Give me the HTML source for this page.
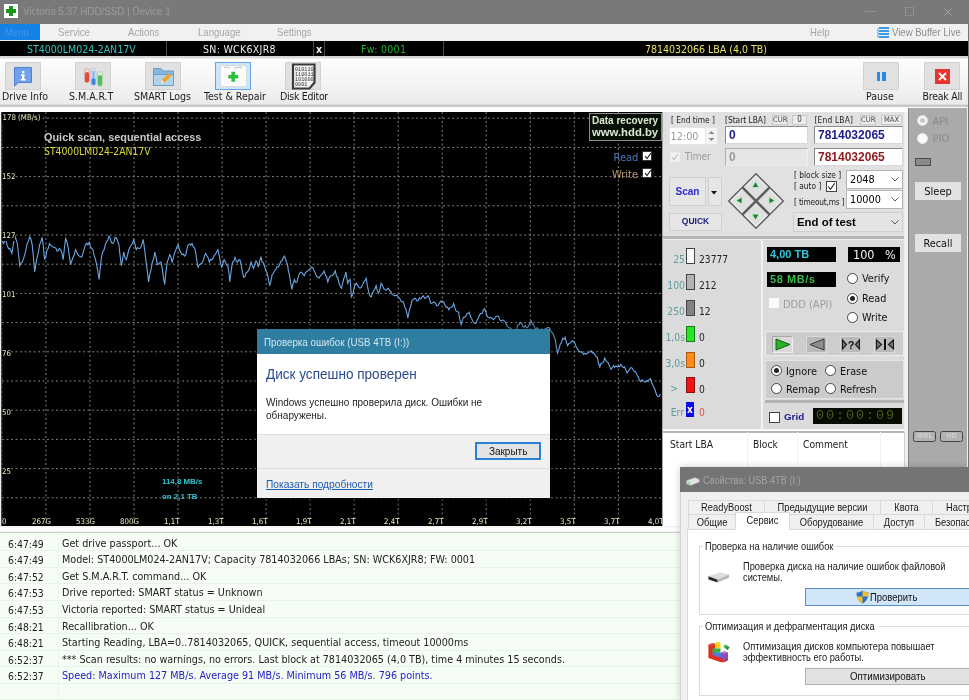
<!DOCTYPE html>
<html><head><meta charset="utf-8"><title>Victoria 5.37 HDD/SSD | Device 1</title>
<style>
*{box-sizing:border-box;margin:0;padding:0}
html,body{width:969px;height:700px;overflow:hidden;background:#f0f0f0;font-family:"DejaVu Sans Condensed","Liberation Sans",sans-serif;font-size:10.5px;color:#000}
.a,.a *{position:absolute;white-space:nowrap}
.se{font-family:"Liberation Sans",sans-serif}
.b{font-weight:bold}
.sx{transform:scaleX(.87);transform-origin:0 50%}
.sxc{transform:scaleX(.87);transform-origin:50% 50%}
#title{left:0;top:0;width:969px;height:24px;background:#797979}
#menu{left:0;top:24px;width:969px;height:17px;background:#f1f1f1}
#menu span{top:2px;color:#a6a6a6;font-size:11px;font-family:"Liberation Sans",sans-serif;transform:scaleX(.87);transform-origin:0 50%}
#bar{left:0;top:41px;width:968px;height:15px;background:#000;font-size:10.5px}
#bar span{top:1.600px}
#bar i{top:0;width:1px;height:15px;background:#4a4a4a}
#tool{left:0;top:56px;width:969px;height:56px;background:linear-gradient(#d4d4d4 0,#dadada 2px,#fdfdfd 3px,#f7f7f7 20px,#ebebeb 48px,#c7c7c7 49px,#c9c9c9 50.500px,#fbfbfb 51.500px,#fff 56px)}
.tb{top:6px;width:36px;height:28px;background:#e1e1e1;border:1px solid #d2d2d2}
.tl{top:34px;font-size:10.5px;color:#1a1a1a}
#chart{left:2px;top:112px;width:660px;height:414px;background:#000;overflow:hidden;font-size:7.800px;color:#ececc0}
#chart span{line-height:10px}
.cb{width:10px;height:10px;background:#fff;border:1px solid #333}
.chk{left:1px;top:-1px;width:8px;height:10px}
#rp{left:663px;top:112px;width:241px;height:124px;background:#e1e1e1}
#rp2{left:663px;top:240px;width:241px;height:189px;background:#dbdbdb}
.in{height:18px;background:#fff;border:1px solid #8a8a8a;border-right-color:#d8d8d8;border-bottom-color:#d8d8d8;font-weight:bold;font-size:12px;line-height:16px;padding-left:3px;font-family:"Liberation Sans",sans-serif}
.sb{height:10px;border:1px solid #c8c8c8;background:#ececec;font-size:7.5px;line-height:8px;text-align:center;color:#444}
.btn{background:#e6e6e6;border:1px solid #d0d0d0;text-align:center}
.cmb{height:19px;background:#fff;border:1px solid #b4b4b4;font-size:10.800px;line-height:17px;padding-left:3px}
.rd{width:11px;height:11px;border-radius:50%;background:#fff;border:1px solid #444}
.rd.on::after{content:"";position:absolute;left:2px;top:2px;width:5px;height:5px;border-radius:50%;background:#222}
.rl{font-size:10.800px;line-height:14px;color:#111}
.bl{left:23px;width:9px;height:16px;border:1px solid #444}
.bt{font-size:10.300px;line-height:14px;color:#5f9ea0;text-align:right;width:22px;left:0;margin-top:3px}
.bn{font-size:10.200px;line-height:14px;left:36px;color:#222;margin-top:3px}
#gp{left:908px;top:108px;width:59px;height:359px;background:#aaaaaa}
#log{left:0;top:533px;width:680px;height:167px;background:#f5fdf5;font-size:10.7px;color:#222}
#log div{left:0;height:16.590px;width:680px;border-bottom:1px solid #e9f4e9;line-height:16px}
#log span{top:1px}
#log i{position:absolute;left:58px;top:0;width:1px;height:167px;background:#ebf5eb}
#log .t{left:8px;font-size:10.300px}
#log .m{left:62px}
#dlg{left:257px;top:329px;width:293px;height:169px;background:#f0f0f0;box-shadow:0 1px 10px 2px rgba(0,0,0,.55);font-family:"Liberation Sans",sans-serif;font-size:11px}
#pw{left:680px;top:467px;width:289px;height:233px;background:#f0f0f0;font-family:"Liberation Sans",sans-serif;font-size:10.5px;color:#1a1a1a;overflow:hidden;box-shadow:0 0 7px rgba(0,0,0,.2)}
.tab{height:15px;border:1px solid #d9d9d9;border-bottom:none;background:#f0f0f0}
#pw span{font-size:10.500px;line-height:13px;transform:scaleX(.887);transform-origin:0 50%}
#pw span.c{text-align:center;transform-origin:50% 50%}
.gb{border:1px solid #dcdcdc}
</style></head><body><div id="root" style="position:absolute;left:0;top:0;width:969px;height:700px;overflow:hidden;will-change:transform;opacity:.999">
<div id="title" class="a">
  <div style="left:4px;top:4px;width:14px;height:14px;background:#fff"></div>
  <div style="left:9px;top:6px;width:4px;height:10px;background:#169a16"></div>
  <div style="left:6px;top:9px;width:10px;height:4px;background:#169a16"></div>
  <div class="se" style="left:23px;top:5px;font-size:11.5px;color:#9b9b9b;transform:scaleX(.855);transform-origin:0 50%">Victoria 5.37 HDD/SSD | Device 1</div>
  <div style="left:865px;top:11px;width:10px;height:1px;background:#959595"></div>
  <div style="left:905px;top:7px;width:8.500px;height:9px;border:1px solid #8e8e8e"></div>
  <svg style="left:944px;top:7.500px" width="8" height="8"><path d="M0.500 0.500L7.500 7.500M7.500 0.500L0.500 7.500" stroke="#a2a2a2" stroke-width="1"/></svg>
</div>
<div class="a" style="left:968px;top:24px;width:1px;height:443px;background:#747474;z-index:5"></div><div class="a" style="left:967px;top:108px;width:1px;height:359px;background:#efefef;z-index:5"></div><div class="a" style="left:908px;top:108px;width:1px;height:359px;background:#808080;z-index:5"></div>
<div id="menu" class="a">
  <div style="left:0;top:0;width:39.500px;height:15.500px;background:#1681e4"></div>
  <span style="left:5px;color:#3f96ee">Menu</span>
  <span style="left:58px">Service</span>
  <span style="left:128px">Actions</span>
  <span style="left:198px">Language</span>
  <span style="left:277px">Settings</span>
  <span style="left:810px">Help</span>
  <svg style="left:877px;top:3px" width="12" height="12"><g fill="#3d98ea"><rect x="0" y="1" width="2" height="10" fill="#9ccaf2"/><rect x="2" y="0" width="10" height="2"/><rect x="2" y="3" width="10" height="2"/><rect x="2" y="6" width="10" height="2"/><rect x="2" y="9" width="10" height="2"/></g></svg>
  <span style="left:892px;color:#8c8c8c">View Buffer Live</span>
</div>
<div id="bar" class="a">
  <span style="left:27px;color:#34c4c0">ST4000LM024-2AN17V</span>
  <i style="left:166px"></i>
  <span style="left:203px;color:#ededed;letter-spacing:.3px">SN: WCK6XJR8</span>
  <i style="left:313px"></i>
  <span class="b" style="left:316px;color:#f0f0f0">x</span>
  <i style="left:324px"></i>
  <span style="left:361px;color:#22b02c;letter-spacing:.3px">Fw: 0001</span>
  <i style="left:443px"></i>
  <span style="left:645px;color:#e8e264">7814032066 LBA (4,0 TB)</span>
</div>
<div id="tool" class="a">
  <div class="tb" style="left:5px"><svg style="left:6px;top:3px" width="22" height="22"><path d="M2.5 1.5h17v15h-13l-4 3.5z" fill="#6fa1ec" stroke="#4c7fd4"/><rect x="10" y="5" width="2.4" height="2.2" fill="#fff"/><rect x="9" y="8.5" width="3.4" height="1.5" fill="#fff"/><rect x="10" y="8.5" width="2.4" height="5.5" fill="#fff"/><rect x="8.6" y="13" width="5.2" height="1.5" fill="#fff"/></svg></div><div class="tl" style="left:2px">Drive Info</div>
  <div class="tb" style="left:75px"><svg style="left:6px;top:3px" width="24" height="22"><rect x="2.5" y="2.5" width="5" height="14" rx="2.5" fill="#f3d6d6" stroke="#d8b0b0"/><rect x="3" y="6" width="4" height="10.5" rx="2" fill="#e8483c"/><rect x="9" y="2.500" width="5" height="17" rx="2.5" fill="#dbe8f6" stroke="#b8c8e0"/><rect x="9.500" y="12" width="4" height="7" rx="2" fill="#3b82d8"/><rect x="10.5" y="5" width="2" height="8" fill="#7fb0e6"/><rect x="15.500" y="5.500" width="5" height="15" rx="2.500" fill="#d8efd8" stroke="#b4d4b4"/><rect x="16" y="9" width="4" height="11" rx="2" fill="#4cc05c"/></svg></div><div class="tl" style="left:69px">S.M.A.R.T</div>
  <div class="tb" style="left:145px"><svg style="left:6px;top:3px" width="24" height="21"><path d="M1.500 2.500h7.500l2 2.500h10.500v14.500h-20z" fill="#86b6dc" stroke="#6a9cc8"/><path d="M1.500 8.500h20v11h-20z" fill="#b2d3ec" stroke="#6a9cc8"/><path d="M8.500 17.500l1.300-3.800 6.700-6.200 2.800 2.800-6.800 6.200z" fill="#f0a232"/><path d="M8.500 17.500l1.300-3.800 2.700 2.800z" fill="#fbe6c4"/></svg></div><div class="tl" style="left:134px">SMART Logs</div>
  <div class="tb" style="left:215px;background:#cfe5f9;border-color:#62a4e6"><svg style="left:3px;top:1px" width="30" height="25"><rect x="1.500" y="1.500" width="26" height="21" rx="2" fill="#fbfbfb" stroke="#dcdcdc"/><path d="M5 3.500q4.500-1.500 6 1M15 4.500q3-2 8-1" stroke="#bdbdbd" fill="none"/><path d="M12.400 7.800h3.600v3.200h3.200v3.600h-3.200v3.200h-3.600v-3.200h-3.200v-3.600h3.200z" fill="#2dc03a"/></svg></div><div class="tl" style="left:204px">Test &amp; Repair</div>
  <div class="tb" style="left:285px"><svg style="left:4px;top:0px" width="28" height="27" font-family="Liberation Mono,monospace" font-size="5.200" fill="#333"><path d="M3 1.500h21.500v18l-5 6h-16.500z" fill="#f4f4f4" stroke="#3a3a3a" stroke-width="2.200"/><text x="5" y="7.500">010110</text><text x="5" y="12.500">110011</text><text x="5" y="17.500">101000</text><text x="5" y="22.500">0001</text></svg></div><div class="tl" style="left:280px;letter-spacing:-.3px">Disk Editor</div>
  <div class="tb" style="left:863px"><div style="left:12.500px;top:9px;width:3.500px;height:9px;background:#2a8be2"></div><div style="left:18px;top:9px;width:3.500px;height:9px;background:#2a8be2"></div></div><div class="tl" style="left:866px">Pause</div>
  <div class="tb" style="left:924px"><div style="left:10px;top:6px;width:15px;height:15px;background:#e8362e"></div><svg style="left:13px;top:9px" width="9" height="9"><path d="M1 1L8 8M8 1L1 8" stroke="#fff" stroke-width="1.800"/></svg></div><div class="tl" style="left:922.500px;letter-spacing:-.25px">Break All</div>
</div>
<div id="chart" class="a">
<svg width="660" height="415" style="left:0;top:0">
<g stroke="#7e7e7e" stroke-width="1" stroke-dasharray="2,2.500" style="filter:blur(.35px)"><line x1="-0.1" y1="0" x2="-0.1" y2="416"/><line x1="43.9" y1="0" x2="43.9" y2="416"/><line x1="88.0" y1="0" x2="88.0" y2="416"/><line x1="132.0" y1="0" x2="132.0" y2="416"/><line x1="176.0" y1="0" x2="176.0" y2="416"/><line x1="220.1" y1="0" x2="220.1" y2="416"/><line x1="264.1" y1="0" x2="264.1" y2="416"/><line x1="308.1" y1="0" x2="308.1" y2="416"/><line x1="352.1" y1="0" x2="352.1" y2="416"/><line x1="396.2" y1="0" x2="396.2" y2="416"/><line x1="440.2" y1="0" x2="440.2" y2="416"/><line x1="484.2" y1="0" x2="484.2" y2="416"/><line x1="528.3" y1="0" x2="528.3" y2="416"/><line x1="572.3" y1="0" x2="572.3" y2="416"/><line x1="616.3" y1="0" x2="616.3" y2="416"/><line x1="660.4" y1="0" x2="660.4" y2="416"/><line x1="0" y1="6.2" x2="660" y2="6.2"/><line x1="0" y1="35.4" x2="660" y2="35.4"/><line x1="0" y1="64.6" x2="660" y2="64.6"/><line x1="0" y1="93.8" x2="660" y2="93.8"/><line x1="0" y1="123.0" x2="660" y2="123.0"/><line x1="0" y1="152.2" x2="660" y2="152.2"/><line x1="0" y1="181.4" x2="660" y2="181.4"/><line x1="0" y1="210.6" x2="660" y2="210.6"/><line x1="0" y1="239.8" x2="660" y2="239.8"/><line x1="0" y1="269.0" x2="660" y2="269.0"/><line x1="0" y1="298.2" x2="660" y2="298.2"/><line x1="0" y1="327.4" x2="660" y2="327.4"/><line x1="0" y1="356.6" x2="660" y2="356.6"/><line x1="0" y1="385.8" x2="660" y2="385.8"/></g>
<polyline transform="translate(-2,-112)" fill="none" stroke="#6ea6e2" stroke-width="1.100" points="1.2,239.8 2.5,241.5 3.7,243.5 5.4,238.6 6.4,242.5 7.4,246.0 8.7,248.8 9.9,248.5 10.9,250.8 11.9,253.4 13.6,242.3 15.4,237.3 16.4,240.4 17.3,243.5 18.6,255.0 19.8,265.8 21.1,262.8 22.3,262.1 23.6,258.4 24.8,254.7 26.0,249.6 27.2,243.5 28.4,241.2 29.7,236.8 31.0,239.3 32.2,244.8 33.5,257.7 34.7,272.0 36.0,263.1 37.2,257.2 38.4,252.1 39.6,244.8 40.9,241.7 42.1,237.3 43.4,246.8 44.6,259.6 45.9,256.4 47.1,249.7 48.3,248.3 49.5,243.5 50.8,245.3 52.0,246.4 53.3,247.2 54.5,247.2 55.8,248.0 57.0,251.0 58.2,250.7 59.5,248.5 60.7,249.7 62.0,253.5 63.2,259.6 64.4,248.2 65.6,238.6 66.8,241.2 68.1,247.2 69.3,255.8 70.6,264.6 71.8,260.7 73.1,257.2 74.3,254.7 75.5,249.7 76.8,252.3 78.0,254.7 79.2,256.0 80.5,256.4 81.7,257.2 82.9,253.7 84.2,248.8 85.4,244.8 86.7,243.2 87.9,244.9 89.2,242.3 90.4,246.6 91.7,248.5 92.9,249.7 94.1,255.4 95.4,259.0 96.6,264.6 97.8,271.0 99.1,279.4 100.3,267.5 101.5,257.2 102.8,251.5 104.0,249.9 105.3,244.8 106.5,241.5 107.8,240.2 109.0,236.1 110.2,238.2 111.5,242.7 112.7,243.5 114.0,241.7 115.2,237.3 116.4,238.0 117.7,241.3 118.9,244.8 120.2,256.8 121.4,265.8 122.6,258.9 123.8,252.2 125.0,257.6 126.3,259.6 127.5,255.1 128.8,249.8 130.0,247.2 131.2,245.2 132.5,243.3 133.7,239.8 134.9,243.9 136.2,249.7 137.4,247.8 138.7,248.3 139.9,248.5 141.0,247.1 142.1,243.3 143.2,239.3 144.6,249.3 146.1,262.1 147.3,271.1 148.6,281.9 149.8,274.3 151.1,269.5 152.3,262.1 153.6,259.0 154.8,252.2 156.1,257.2 157.3,264.6 158.5,264.0 159.8,262.7 161.0,262.1 162.2,268.4 163.5,277.8 164.7,284.4 165.9,271.9 167.2,262.1 168.4,258.9 169.7,254.7 170.9,257.0 172.1,262.1 173.4,257.7 174.6,252.8 175.9,249.7 177.1,246.4 178.3,244.8 179.5,249.8 180.8,252.5 182.0,254.7 183.3,254.0 184.5,256.1 185.8,254.7 187.0,248.7 188.2,244.8 189.5,244.0 190.7,245.2 192.0,243.5 193.2,246.9 194.5,247.9 195.7,252.2 196.9,261.4 198.1,267.1 199.4,264.8 200.6,263.7 201.9,263.3 203.1,261.0 204.4,256.1 205.6,253.4 206.8,255.6 208.1,257.7 209.3,262.1 210.5,259.4 211.8,259.9 213.0,258.4 214.2,255.3 215.5,254.4 216.8,251.4 218.0,249.7 219.2,255.3 220.5,263.0 221.7,267.1 222.9,263.3 224.1,259.6 225.4,261.9 226.6,265.1 227.9,265.8 228.9,272.7 229.8,281.9 231.2,270.8 232.5,262.2 233.8,261.2 235.0,257.2 236.2,260.8 237.4,262.2 238.7,260.0 239.9,259.7 241.1,264.4 242.4,272.2 243.6,277.1 244.8,277.0 246.1,272.7 247.3,272.1 248.6,270.4 249.8,266.9 251.1,262.2 252.3,265.7 253.5,268.4 254.8,264.4 256.0,261.0 257.2,262.7 258.5,267.2 259.8,260.5 261.0,257.2 262.2,262.2 263.5,262.9 264.7,267.2 265.9,271.0 267.2,273.3 268.4,278.6 269.6,285.7 270.9,281.3 272.1,274.6 273.3,273.3 274.6,270.5 275.8,269.6 277.0,266.8 278.3,267.1 279.5,264.7 280.8,261.3 282.0,261.0 283.2,257.5 284.5,256.0 286.0,260.6 287.5,264.7 288.4,270.9 289.4,274.6 290.6,282.4 291.9,289.4 293.1,283.7 294.4,279.5 295.6,282.3 296.9,282.0 298.1,277.6 299.4,273.7 300.6,272.1 301.8,272.5 303.1,274.4 304.3,275.8 305.5,272.6 306.8,271.4 308.0,270.9 309.2,269.2 310.5,268.7 311.7,267.2 312.9,267.9 314.2,270.8 315.4,273.3 316.6,276.6 317.9,277.1 319.1,278.2 320.4,275.8 321.6,274.7 322.9,273.2 324.1,270.9 325.3,274.9 326.6,277.0 327.8,282.0 329.0,278.3 330.3,276.1 331.5,275.8 332.8,275.6 334.0,273.3 335.3,270.9 336.5,276.7 337.8,277.4 339.0,283.3 340.2,286.2 341.5,288.2 342.7,283.2 343.9,278.3 344.9,276.0 345.9,272.1 347.6,283.3 348.9,280.7 350.1,279.5 351.4,296.9 352.6,294.9 353.8,289.4 355.1,284.8 356.3,283.3 357.5,285.1 358.8,287.4 360.0,288.2 361.2,287.6 362.5,284.9 363.7,282.0 364.9,280.9 366.2,278.3 367.4,286.2 368.7,291.9 369.9,295.9 371.2,296.9 372.4,293.3 373.7,290.7 374.9,288.9 376.1,285.7 377.4,290.9 378.6,293.2 379.9,289.6 381.1,283.3 382.3,285.0 383.6,288.4 384.8,289.4 386.0,290.3 387.3,288.9 388.5,288.2 389.7,290.7 391.0,291.9 392.2,294.4 393.4,295.1 394.7,295.6 395.9,295.6 397.2,294.9 398.4,297.8 399.7,298.1 400.9,301.1 402.2,301.9 403.4,301.8 404.6,306.4 405.9,309.3 406.9,313.2 407.8,317.9 409.6,309.3 410.8,305.8 412.0,300.6 413.2,299.6 414.5,298.1 415.7,298.7 417.0,301.0 418.2,300.6 419.5,297.9 420.7,299.0 422.0,296.9 423.2,295.6 424.5,298.1 425.7,298.1 426.9,296.8 428.1,295.6 429.4,298.4 430.6,303.1 431.8,303.4 433.1,302.2 434.3,301.8 435.5,303.4 436.8,305.8 438.0,305.5 439.3,303.4 440.5,301.3 441.8,301.8 442.5,301.1 443.8,302.3 445.0,304.9 446.2,307.2 447.5,307.1 448.7,309.8 449.9,307.4 451.1,307.3 452.4,306.9 453.6,303.6 454.9,307.9 456.1,311.1 457.4,311.5 458.6,312.3 459.9,319.9 461.1,324.7 462.3,320.3 463.5,317.2 464.8,317.2 466.0,316.0 467.1,313.7 468.1,313.3 469.2,312.3 470.7,317.1 472.2,319.7 473.4,322.4 474.7,323.5 475.9,323.4 477.1,320.1 478.4,318.0 479.6,314.8 480.9,313.5 482.1,313.5 483.4,309.7 484.6,308.6 485.9,312.3 487.1,316.0 488.3,317.6 489.6,318.1 490.8,317.2 492.0,318.4 493.3,319.7 494.5,318.5 496.0,316.4 497.5,316.0 498.6,316.5 499.6,319.2 500.7,321.0 501.9,320.2 503.2,320.0 504.4,321.0 505.6,322.8 506.9,325.6 508.1,327.2 509.3,328.0 510.6,328.1 511.8,329.6 513.0,331.3 514.3,332.2 515.5,330.9 516.6,328.7 517.7,325.2 518.8,324.7 520.2,322.4 521.7,323.4 523.0,326.6 524.2,327.2 525.4,325.5 526.7,328.0 527.9,327.2 529.0,325.4 530.0,322.4 531.1,321.0 532.4,323.9 533.6,324.7 535.4,329.6 536.6,327.9 537.9,328.3 539.1,329.6 540.3,329.9 541.6,328.8 542.8,330.9 544.0,331.3 545.3,328.3 546.5,328.4 547.7,327.5 549.0,327.6 550.2,329.6 551.5,331.9 552.7,333.3 554.0,336.2 555.2,339.5 556.4,346.8 557.6,353.2 558.9,349.4 560.1,344.5 561.4,342.5 562.6,338.3 563.9,339.4 565.1,337.1 566.4,342.1 567.6,345.7 568.8,343.4 570.0,343.3 571.2,342.0 572.5,340.8 573.7,341.7 575.0,343.2 576.2,347.0 577.4,348.5 578.7,351.0 579.9,351.9 581.2,351.6 582.4,352.7 583.7,354.4 584.9,353.4 586.2,354.3 587.4,353.2 588.6,352.4 589.9,351.9 591.1,350.7 592.3,352.9 593.6,352.8 594.8,354.4 596.0,356.7 597.3,356.9 598.5,363.3 599.8,366.8 601.0,363.5 602.2,363.1 603.5,362.2 604.7,358.1 606.0,360.8 607.2,361.8 608.4,363.0 609.7,366.6 610.9,369.3 612.1,367.9 613.4,365.5 614.6,367.4 615.9,365.9 617.1,366.8 618.3,366.2 619.6,366.5 620.8,364.3 622.0,366.2 623.3,367.6 624.5,366.8 625.8,369.8 627.0,373.0 628.2,371.7 629.5,369.3 630.8,367.6 632.0,368.0 633.2,370.0 634.5,371.6 635.7,371.7 636.9,374.7 638.1,376.7 639.4,379.9 640.6,381.6 641.9,380.0 643.1,380.4 644.3,381.8 645.6,382.1 646.8,380.4 648.0,381.6 649.3,379.4 650.5,378.7 651.8,383.1 653.0,385.4 654.2,387.8 655.5,391.5 656.8,395.5 658.0,396.5 659.2,396.5 660.4,394.0"/>
</svg>
  <span style="left:-.500px;top:1px;background:#000;padding:0 1px">178 (MB/s)</span>
  <span style="left:0;top:60px;background:#000">152</span>
  <span style="left:0;top:119px;background:#000">127</span>
  <span style="left:0;top:178px;background:#000">101</span>
  <span style="left:0;top:237px;background:#000">76</span>
  <span style="left:0;top:296px;background:#000">50</span>
  <span style="left:0;top:355px;background:#000">25</span>
  <span style="left:0px;top:404.500px">0</span>
  <span style="left:30px;top:404.500px">267G</span>
  <span style="left:74px;top:404.500px">533G</span>
  <span style="left:118px;top:404.500px">800G</span>
  <span style="left:162px;top:404.500px">1,1T</span>
  <span style="left:206px;top:404.500px">1,3T</span>
  <span style="left:250px;top:404.500px">1,6T</span>
  <span style="left:294px;top:404.500px">1,9T</span>
  <span style="left:338px;top:404.500px">2,1T</span>
  <span style="left:382px;top:404.500px">2,4T</span>
  <span style="left:426px;top:404.500px">2,7T</span>
  <span style="left:470px;top:404.500px">2,9T</span>
  <span style="left:514px;top:404.500px">3,2T</span>
  <span style="left:558px;top:404.500px">3,5T</span>
  <span style="left:602px;top:404.500px">3,7T</span>
  <span style="left:646px;top:404.500px">4,0T</span>
  <span class="b se" style="left:42px;top:19px;font-size:10.900px;line-height:12px;color:#c9c9c9">Quick scan, sequential access</span>
  <span style="left:42px;top:32.500px;font-size:10.300px;line-height:12px;color:#dada3c">ST4000LM024-2AN17V</span>
  <span class="b se" style="left:160px;top:365px;font-size:7.900px;color:#2fc4d4">114,8 MB/s</span>
  <span class="b se" style="left:160px;top:379.500px;font-size:7.900px;color:#2fc4d4">on 2,1 TB</span>
  <div style="left:587px;top:1px;width:73px;height:28px;background:#061006;border:1px solid #8c8c8c"></div>
  <span class="b se" style="left:590px;top:3px;font-size:10px;line-height:12px;color:#dbe8d2">Data recovery</span>
  <span class="b se" style="left:590px;top:14px;font-size:11.300px;line-height:13px;color:#dbe8d2">www.hdd.by</span>
  <span style="left:611.500px;top:39px;font-size:11px;line-height:13px;color:#4c7cbc">Read</span>
  <div class="cb" style="left:640px;top:39px"><svg class="chk" viewBox="0 0 8 10"><path d="M1 5l2 2.500 4-5.500" stroke="#222" fill="none" stroke-width="1.200"/></svg></div>
  <span style="left:610px;top:56px;font-size:11px;line-height:13px;color:#b9986e">Write</span>
  <div class="cb" style="left:640px;top:56px"><svg class="chk" viewBox="0 0 8 10"><path d="M1 5l2 2.500 4-5.500" stroke="#222" fill="none" stroke-width="1.200"/></svg></div>
</div>
<div id="rp" class="a">
  <span style="left:8px;top:2px;font-size:8.300px;line-height:12px;color:#222">[ End time ]</span>
  <span style="left:62px;top:2px;font-size:8.300px;line-height:12px;color:#222">[Start LBA]</span>
  <div class="sb" style="left:109px;top:3px;width:16px">CUR</div>
  <div class="sb" style="left:129px;top:3px;width:15px;font-size:8px">0</div>
  <span style="left:151.500px;top:2px;font-size:8.300px;line-height:12px;color:#222;letter-spacing:.2px">[End LBA]</span>
  <div class="sb" style="left:197px;top:3px;width:16px">CUR</div>
  <div class="sb" style="left:218px;top:3px;width:21px">MAX</div>
  <div style="left:6px;top:15px;width:49px;height:18px;background:#fff;border:1px solid #e6e6e6"></div>
  <span style="left:7.500px;top:17.500px;font-size:10.800px;line-height:14px;color:#9a9a9a">12:00</span>
  <div style="left:42px;top:16px;width:12px;height:16px;background:#f4f4f4;border-left:1px solid #e8e8e8"></div>
  <svg style="left:45px;top:18px" width="7" height="12"><path d="M0.500 4L3.500 1L6.500 4zM0.500 8L3.500 11L6.500 8z" fill="#8a8a8a"/></svg>
  <div class="in" style="left:62px;top:14px;width:83px;color:#1c1c8a">0</div>
  <div class="in" style="left:151px;top:14px;width:89px;color:#1c1c8a">7814032065</div>
  <div style="left:7px;top:40px;width:10px;height:10px;background:#f4f4f4;border:1px solid #ececec"></div>
  <svg style="left:8px;top:40px" width="8" height="10" viewBox="0 0 8 10"><path d="M1 5l2 2.500 4-5.500" stroke="#bdbdbd" fill="none" stroke-width="1.200"/></svg>
  <span style="left:22px;top:38px;font-size:10px;line-height:14px;color:#9a9a9a">Timer</span>
  <div class="in" style="left:62px;top:36px;width:83px;background:#e6e6e6;color:#9a9a9a;border-color:#b0b0b0 #eee #eee #b0b0b0">0</div>
  <div class="in" style="left:151px;top:36px;width:89px;color:#8e1a1a">7814032065</div>
  <div class="btn b se" style="left:6px;top:65px;width:37px;height:29px;font-size:10px;line-height:27px;color:#2a2acc">Scan</div>
  <div class="btn" style="left:45px;top:65px;width:14px;height:29px"></div>
  <svg style="left:47.500px;top:78.500px" width="6" height="4"><path d="M0 0h6l-3 3.500z" fill="#111"/></svg>
  <div class="btn b se" style="left:6px;top:101px;width:53px;height:18px;font-size:8.500px;line-height:14.500px;color:#1c1c7c">QUICK</div>
  <svg style="left:63.300px;top:60px" width="60" height="58" viewBox="-30 -29 60 58">
    <path d="M0-27.300L27.300 0L0 27.300L-27.300 0z" fill="#e0e0e0" stroke="#5e5e5e" stroke-width="1.400"/>
    <path d="M0-25L25 0L0 25L-25 0z" fill="none" stroke="#f4f4f4" stroke-width="1"/>
    <path d="M-13.600-13.600L13.600 13.600M13.600-13.600L-13.600 13.600" stroke="#5f5f5f" stroke-width="2.600"/>
    <g fill="#1f7a30" stroke="#8fe6a0" stroke-width="1.200" paint-order="stroke"><path d="M-0.500-18.600l2.600 4.500h-5.200z"/><path d="M-0.500 18.200l2.600-4.500h-5.200z"/><path d="M-19-0.500l4.500-2.600v5.200z"/><path d="M18-0.500l-4.500-2.600v5.200z"/></g>
  </svg>
  <span style="left:131px;top:57px;font-size:8.300px;line-height:12px;color:#222">[ block size ]</span>
  <span style="left:131px;top:68px;font-size:8.300px;line-height:12px;color:#222">[ auto ]</span>
  <div class="cb" style="left:163px;top:69px;width:11px;height:11px;border-color:#444"><svg class="chk" viewBox="0 0 8 10" style="left:0;top:-1px;width:9px;height:11px"><path d="M1 5l2 2.500 4-5.500" stroke="#222" fill="none" stroke-width="1"/></svg></div>
  <span style="left:131px;top:84px;font-size:8.300px;line-height:12px;color:#222;letter-spacing:-.2px">[ timeout,ms ]</span>
  <div class="cmb" style="left:183px;top:58px;width:57px">2048</div>
  <div class="cmb" style="left:183px;top:78px;width:57px">10000</div>
  <svg style="left:228px;top:65px" width="8" height="5"><path d="M0.500 0.500L4 4L7.500 0.500" stroke="#555" fill="none"/></svg>
  <svg style="left:228px;top:85px" width="8" height="5"><path d="M0.500 0.500L4 4L7.500 0.500" stroke="#555" fill="none"/></svg>
  <div class="cmb b se" style="left:130px;top:100px;width:110px;height:20px;background:#e4e4e4;border-color:#cfcfcf;font-size:11.400px;line-height:18px">End of test</div>
  <svg style="left:228px;top:108px" width="8" height="5"><path d="M0.500 0.500L4 4L7.500 0.500" stroke="#555" fill="none"/></svg>
</div>
<div class="a" style="left:663px;top:236px;width:241px;height:3px;background:#b6b6b6"></div>
<div id="rp2" class="a">
  <div style="left:98px;top:0;width:2px;height:190px;background:#f2f2f2"></div>
  <div style="left:0;top:8px"><span class="bt" style="top:1px">25</span><div class="bl" style="background:#fafafa"></div><span class="bn" style="top:2px">23777</span></div>
  <div style="left:0;top:34px"><span class="bt" style="top:1px">100</span><div class="bl" style="background:#b4b4b4"></div><span class="bn" style="top:2px">212</span></div>
  <div style="left:0;top:60px"><span class="bt" style="top:1px">250</span><div class="bl" style="background:#828282"></div><span class="bn" style="top:2px">12</span></div>
  <div style="left:0;top:86px"><span class="bt" style="top:1px">1,0s</span><div class="bl" style="background:#25e825;border-color:#1a7a1a"></div><span class="bn" style="top:2px">0</span></div>
  <div style="left:0;top:112px"><span class="bt" style="top:1px">3,0s</span><div class="bl" style="background:#ff8c1c;border-color:#a85a10"></div><span class="bn" style="top:2px">0</span></div>
  <div style="left:0;top:137px"><span class="bt" style="top:1px;width:15px">&gt;</span><div class="bl" style="background:#f01414;border-color:#8a1010"></div><span class="bn" style="top:3px">0</span></div>
  <div style="left:0;top:162px"><span class="bt" style="top:-.500px;width:21px">Err</span><div class="bl" style="background:#0a0ae6;border:none;width:8px;height:15px"></div><span class="b" style="left:24px;top:1px;font-size:10px;line-height:13px;color:#fff">x</span><span class="bn" style="top:.500px;color:#e2504a">0</span></div>
  <div style="left:104px;top:7px;width:69px;height:15px;background:#000"></div>
  <span class="b se" style="left:107px;top:7px;font-size:11px;line-height:14px;color:#2fc8dc">4,00 TB</span>
  <div style="left:185px;top:7px;width:52px;height:15px;background:#000"></div>
  <span style="left:190px;top:7px;font-size:12.500px;line-height:15px;color:#f4f4f4">100</span>
  <span style="left:222px;top:7px;font-size:12.500px;line-height:15px;color:#f4f4f4">%</span>
  <div style="left:104px;top:32px;width:69px;height:15px;background:#000"></div>
  <span class="b se" style="left:107px;top:32px;font-size:11px;line-height:14px;color:#3cb84c;letter-spacing:.55px">58 MB/s</span>
  <div style="left:106px;top:58px;width:10px;height:10px;background:#fbfbfb"></div>
  <span style="left:120px;top:57.500px;font-size:11px;line-height:14px;color:#9c9c9c">DDD (API)</span>
  <div class="rd" style="left:184px;top:33px"></div><span class="rl" style="left:199px;top:32px">Verify</span>
  <div class="rd on" style="left:184px;top:53px"></div><span class="rl" style="left:199px;top:52px">Read</span>
  <div class="rd" style="left:184px;top:72px"></div><span class="rl" style="left:199px;top:71px">Write</span>
  <div style="left:102px;top:91px;width:139px;height:25px;background:#cdcdcd;border:1px solid #ececec"></div>
  <div style="left:109px;top:96px;width:21px;height:17px;background:#d9d9d9;border:1px solid #efefef;border-top-color:#a8a8a8;border-left-color:#a8a8a8"></div>
  <svg style="left:112px;top:98px" width="16" height="13"><path d="M1 1L15 6.500L1 12z" fill="#22b422" stroke="#145a14" stroke-width="1"/></svg>
  <div style="left:143px;top:96px;width:21px;height:17px;background:#b9b9b9;border:1px solid #dadada"></div>
  <svg style="left:146px;top:98px" width="16" height="13"><path d="M15 1L1 6.500L15 12z" fill="#8e8e8e" stroke="#3a3a3a" stroke-width="1"/></svg>
  <div style="left:177px;top:96px;width:21px;height:17px;background:#b9b9b9;border:1px solid #dadada"></div>
  <svg style="left:178px;top:98px" width="20" height="13"><path d="M1.500 2L5.500 6.500L1.500 11z" fill="#7c7c7c" stroke="#1c1c1c" stroke-width="1.200"/><path d="M18.500 2L14.500 6.500L18.500 11z" fill="#7c7c7c" stroke="#1c1c1c" stroke-width="1.200"/><text x="10" y="10.500" text-anchor="middle" font-size="11" font-weight="bold" font-family="Liberation Sans,sans-serif" fill="#111">?</text></svg>
  <div style="left:211px;top:96px;width:21px;height:17px;background:#b9b9b9;border:1px solid #dadada"></div>
  <svg style="left:212px;top:98px" width="20" height="13"><path d="M1.500 2L6.500 6.500L1.500 11z" fill="#7c7c7c" stroke="#1c1c1c" stroke-width="1.200"/><path d="M18.500 2L13.500 6.500L18.500 11z" fill="#7c7c7c" stroke="#1c1c1c" stroke-width="1.200"/><rect x="9" y="1" width="2" height="11" fill="#111"/></svg>
  <div style="left:102px;top:120px;width:139px;height:39px;background:#cbcbcb;border:1px solid #e4e4e4"></div>
  <div class="rd on" style="left:108px;top:125px"></div><span class="rl" style="left:123px;top:125px">Ignore</span>
  <div class="rd" style="left:162px;top:125px"></div><span class="rl" style="left:177px;top:125px">Erase</span>
  <div class="rd" style="left:108px;top:143px"></div><span class="rl" style="left:123px;top:143px">Remap</span>
  <div class="rd" style="left:162px;top:143px"></div><span class="rl" style="left:177px;top:143px">Refresh</span>
  <div style="left:102px;top:160px;width:139px;height:3px;background:#b4b4b4"></div>
  <div class="cb" style="left:106px;top:172px;width:11px;height:11px;border-color:#444"></div>
  <span class="b se" style="left:121px;top:170px;font-size:9.800px;line-height:14px;color:#1c1c8a">Grid</span>
  <div style="left:150px;top:168px;width:89px;height:16px;background:#070b00"></div>
  <span style="left:153px;top:168px;font-family:'Liberation Mono',monospace;font-size:13.500px;line-height:16px;letter-spacing:1.900px;color:#4a5a1c">00:00:09</span>
</div>
<div class="a" style="left:662px;top:112px;width:1px;height:414px;background:#a4a4a4"></div><div class="a" style="left:663px;top:429px;width:242px;height:2px;background:#f6f6f6"></div>
<div class="a" style="left:663px;top:430px;width:242px;height:96px;background:#fff;border-top:2px solid transparent;border-right:1px solid #cfcfcf"><div style="left:0;top:-1px;width:241px;height:1.500px;background:#b6b6b6"></div>
  <div style="left:84px;top:0;width:1px;height:94px;background:#f1f1f1"></div>
  <div style="left:134px;top:0;width:1px;height:94px;background:#f1f1f1"></div>
  <div style="left:217px;top:0;width:1px;height:94px;background:#f2f2f2"></div>
  <span style="left:7px;top:5.500px;font-size:10.200px;line-height:14px;color:#222">Start LBA</span>
  <span style="left:90px;top:5.500px;font-size:10.200px;line-height:14px;color:#222">Block</span>
  <span style="left:140px;top:5.500px;font-size:10.200px;line-height:14px;color:#222">Comment</span>
</div>
<div id="gp" class="a">
  
  <div class="rd" style="left:9px;top:7px;border-color:#e0e0e0;background:#ececec;box-shadow:inset 0 0 0 2px #f8f8f8"></div><div style="left:12px;top:10px;width:5px;height:5px;border-radius:50%;background:#c8c8c8"></div>
  <span style="left:24.500px;top:6.500px;font-size:11px;line-height:14px;color:#8a8a8a">API</span>
  <div class="rd" style="left:9px;top:25px;border-color:#e8e8e8;background:#fafafa"></div>
  <span style="left:24.500px;top:24px;font-size:11px;line-height:14px;color:#8a8a8a">PIO</span>
  <div style="left:7px;top:49.500px;width:16px;height:8.500px;background:#8a8a8a;border:1px solid #4a4a4a"></div>
  <div style="left:7px;top:74px;width:46px;height:18px;background:#e2e2e2;text-align:center;font-size:11px;line-height:20px;color:#111">Sleep</div>
  <div style="left:7px;top:126px;width:46px;height:18px;background:#e2e2e2;text-align:center;font-size:10.800px;line-height:20px;color:#111">Recall</div>
  <div style="left:5px;top:323px;width:23px;height:11px;background:#b2b2b2;border:1.500px solid #444;border-radius:2.500px;font-size:7px;line-height:8px;text-align:center;font-weight:bold;color:#cdcdcd">WRL</div>
  <div style="left:32px;top:323px;width:23px;height:11px;background:#b2b2b2;border:1.500px solid #444;border-radius:2.500px;font-size:7px;line-height:8px;text-align:center;font-weight:bold;color:#cdcdcd">HD</div>
</div>
<div class="a" style="left:0;top:526px;width:680px;height:7px;background:linear-gradient(#ececec,#fdfdfd 2px,#fff 5px,#cfcfcf 6.500px)"></div><div class="a" style="left:1px;top:112px;width:1px;height:414px;background:#484848"></div>
<div id="log" class="a"><i></i>
  <div style="top:1.60px"><span class="t">6:47:49</span><span class="m">Get drive passport... OK</span></div>
  <div style="top:18.19px"><span class="t">6:47:49</span><span class="m">Model: ST4000LM024-2AN17V; Capacity 7814032066 LBAs; SN: WCK6XJR8; FW: 0001</span></div>
  <div style="top:34.78px"><span class="t">6:47:52</span><span class="m">Get S.M.A.R.T. command... OK</span></div>
  <div style="top:51.37px"><span class="t">6:47:53</span><span class="m">Drive reported: SMART status = Unknown</span></div>
  <div style="top:67.96px"><span class="t">6:47:53</span><span class="m">Victoria reported: SMART status = Unideal</span></div>
  <div style="top:84.55px"><span class="t">6:48:21</span><span class="m">Recallibration... OK</span></div>
  <div style="top:101.14px"><span class="t">6:48:21</span><span class="m">Starting Reading, LBA=0..7814032065, QUICK, sequential access, timeout 10000ms</span></div>
  <div style="top:117.73px"><span class="t">6:52:37</span><span class="m">*** Scan results: no warnings, no errors. Last block at 7814032065 (4,0 TB), time 4 minutes 15 seconds.</span></div>
  <div style="top:134.32px"><span class="t">6:52:37</span><span class="m" style="color:#2222c8">Speed: Maximum 127 MB/s. Average 91 MB/s. Minimum 56 MB/s. 796 points.</span></div>
  <div style="top:150.91px"></div>
</div>
<div id="dlg" class="a">
  <div style="left:0;top:0;width:293px;height:25px;background:#2e7ea2"></div>
  <span class="sx" style="left:6.500px;top:6px;font-size:11.500px;line-height:14px;color:#d3e6ee;transform:scaleX(.85)">Проверка ошибок (USB 4TB (I:))</span>
  <div style="left:0;top:25px;width:293px;height:80px;background:#fff"></div>
  <span class="sx" style="left:9px;top:36px;font-size:15.500px;line-height:18px;color:#2b4a8e;transform:scaleX(.875)">Диск успешно проверен</span>
  <span class="sx" style="left:9px;top:66px;font-size:11.500px;line-height:14px;color:#222">Windows успешно проверила диск. Ошибки не</span>
  <span class="sx" style="left:9px;top:79px;font-size:11.500px;line-height:14px;color:#222">обнаружены.</span>
  <div style="left:0;top:105px;width:293px;height:1px;background:#e0e0e0"></div>
  <div style="left:218px;top:113px;width:66px;height:18px;background:#e3e3e3;border:2px solid #2a82d8;text-align:center;font-size:11.500px;line-height:14px;color:#111"><span class="sxc" style="position:static;display:inline-block">Закрыть</span></div>
  <div style="left:0;top:139px;width:293px;height:1px;background:#dcdcdc"></div>
  <span class="sx" style="left:9px;top:148px;font-size:11.500px;line-height:14px;color:#1c5cb0;text-decoration:underline;transform:scaleX(.886)">Показать подробности</span>
</div>
<div id="pw" class="a">
  <div style="left:0;top:0;width:289px;height:25px;background:#747474"></div>
  <svg style="left:6px;top:8px" width="14" height="11"><path d="M0.500 5.500L9 2.500L13.500 4.500L13.500 7L5 10.500L0.500 9z" fill="#e4e4e4" stroke="#9a9a9a" stroke-width="0.600"/><rect x="1.500" y="6.500" width="3" height="2.500" fill="#9fe0a8"/></svg>
  <span style="left:23px;top:6px;font-size:11.500px;line-height:14px;color:#a4a4a4;transform:scaleX(.8)">Свойства: USB 4TB (I:)</span>
  <div style="left:0;top:25px;width:1px;height:208px;background:#d4d4d4"></div>
  <div class="tab" style="left:8px;top:33px;width:77px"></div><span class="c" style="left:8px;top:34px;width:77px">ReadyBoost</span>
  <div class="tab" style="left:84px;top:33px;width:117px"></div><span class="c" style="left:84px;top:34px;width:117px">Предыдущие версии</span>
  <div class="tab" style="left:200px;top:33px;width:53px"></div><span class="c" style="left:200px;top:34px;width:53px">Квота</span>
  <div class="tab" style="left:252px;top:33px;width:60px"></div><span style="left:266px;top:34px">Настройка</span>
  <div class="tab" style="left:8px;top:47px;width:48px"></div><span class="c" style="left:8px;top:49px;width:48px">Общие</span>
  <div class="tab" style="left:109px;top:47px;width:85px"></div><span class="c" style="left:109px;top:49px;width:85px">Оборудование</span>
  <div class="tab" style="left:193px;top:47px;width:52px"></div><span class="c" style="left:193px;top:49px;width:52px">Доступ</span>
  <div class="tab" style="left:244px;top:47px;width:70px"></div><span style="left:255px;top:49px">Безопасность</span>
  <div style="left:7px;top:62px;width:300px;height:180px;background:#fff;border:1px solid #d9d9d9"></div>
  <div class="tab" style="left:55px;top:45px;width:55px;height:18px;background:#fff"></div><span class="c" style="left:55px;top:47px;width:55px">Сервис</span>
  <div class="gb" style="left:19px;top:79px;width:290px;height:69px"></div>
  <div style="left:23px;top:74px;width:133px;height:10px;background:#fff"></div>
  <span style="left:25px;top:73px">Проверка на наличие ошибок</span>
  <svg style="left:27px;top:104px" width="24" height="13"><path d="M1.400 5.200L13 1.300L22 3.500L10.500 8.500z" fill="#dedede"/><path d="M10.500 8.500L22 3.500L22 6.800L10.500 11.500z" fill="#b9b9b9"/><path d="M1.400 5.200L10.500 8.500L10.500 11.500L1.400 8.500z" fill="#3c3c3c"/><path d="M2.600 6.600L9.300 9L9.300 10.300L2.600 7.900z" fill="#1e1e1e"/></svg>
  <span style="left:63px;top:93px">Проверка диска на наличие ошибок файловой</span>
  <span style="left:63px;top:104px">системы.</span>
  <div style="left:125px;top:121px;width:180px;height:18px;background:#d0e5f8;border:1px solid #5b8fc6"></div>
  <svg style="left:176px;top:123px" width="13" height="14"><path d="M6.500 0.500C4.500 2 2.500 2.500 0.500 2.500C0.500 8 2.500 11.500 6.500 13.500C10.500 11.500 12.500 8 12.500 2.500C10.500 2.500 8.500 2 6.500 0.500z" fill="#2e6fc4"/><path d="M6.500 0.500C8.500 2 10.500 2.500 12.500 2.500L12.500 6.500L6.500 6.500z" fill="#f0c030"/><path d="M0.700 6.500L6.500 6.500L6.500 13.500C3 11.800 1.200 9.500 0.700 6.500z" fill="#f0c030"/></svg>
  <span style="left:190px;top:124px;font-size:11px;color:#111;transform:scaleX(.86)">Проверить</span>
  <div class="gb" style="left:19px;top:159px;width:290px;height:70px"></div>
  <div style="left:23px;top:154px;width:176px;height:10px;background:#fff"></div>
  <span style="left:25px;top:153px">Оптимизация и дефрагментация диска</span>
  <svg style="left:27px;top:173px" width="24" height="23"><path d="M1.400 4.500L6 3L8 4L8 15L17.500 18.500L17.500 22.300L14 22.300L1.400 18z" fill="#dc3226"/><path d="M1.400 4.500L6 3L8 4L3.500 5.500z" fill="#ee5a48"/><path d="M17.500 18.500L21 17L21 20L17.500 22.300z" fill="#a42018"/><path d="M8 3L11.500 1.800L13.500 2.800L13.500 8.500L8 8.500z" fill="#f4d81e"/><path d="M5.500 8.500L13.500 8.500L13.500 12.800L5.500 12.800z" fill="#34ac4a"/><path d="M5.500 12.800L14 12.800L14 18L8 15.500L5.500 14.500z" fill="#4a78e8"/><path d="M14 12.500L17.500 11.200L21 12.500L21 19L17.500 20.500L14 18.500z" fill="#8e4cb4"/><path d="M14 12.500L17.500 11.200L21 12.500L17.500 14z" fill="#b078d0"/><path d="M16.200 6.500L18.500 4.600L22.800 7.200L20.600 10.300z" fill="#2f9a3e"/><path d="M16.200 6.500L18.500 4.600L20 5.500L17.700 7.500z" fill="#5cc86a"/></svg>
  <span style="left:63px;top:173px">Оптимизация дисков компьютера повышает</span>
  <span style="left:63px;top:184px">эффективность его работы.</span>
  <div style="left:125px;top:201px;width:180px;height:17px;background:#e2e2e2;border:1px solid #b0b0b0"></div>
  <span style="left:170px;top:203px;font-size:11px;color:#111">Оптимизировать</span>
</div>
</div></body></html>
